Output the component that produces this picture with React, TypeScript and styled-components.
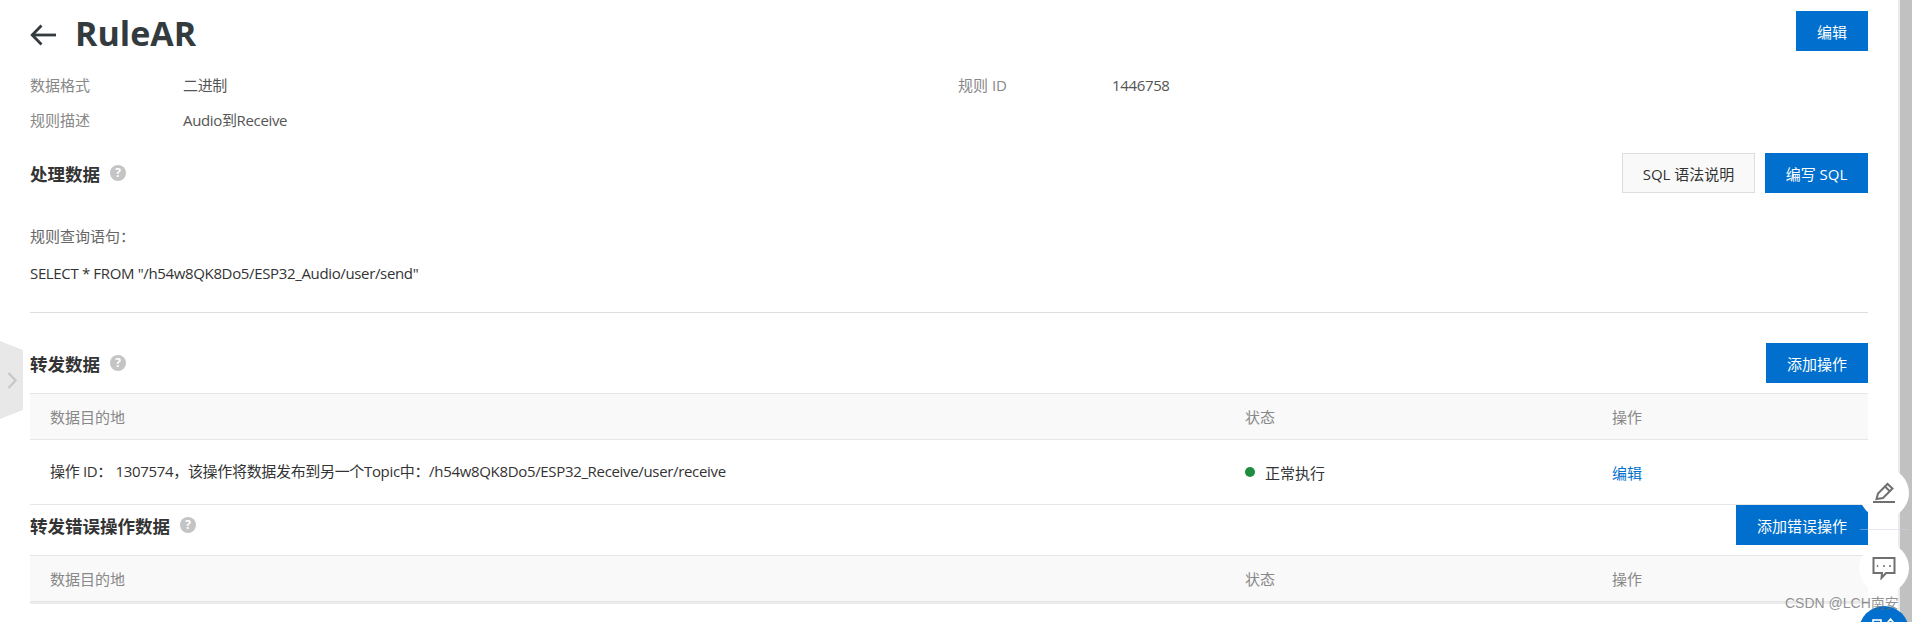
import styled, { createGlobalStyle } from 'styled-components';

const GlobalStyle = createGlobalStyle`
  html, body {
    margin: 0;
    padding: 0;
    background: #fff;
    overflow: hidden;
  }
  body {
    font-family: 'Open Sans', 'Noto Sans CJK SC', sans-serif;
    font-size: 15px;
    color: #333;
  }
`;

const columns = ['数据目的地', '状态', '操作'];

function HelpMark() {
  return <Help>?</Help>;
}

function TableHead() {
  return (
    <HeadRow>
      {columns.map((name) => (
        <span key={name}>{name}</span>
      ))}
    </HeadRow>
  );
}

export default function App() {
  return (
    <Page>
      <GlobalStyle />
      <Main>
        <Header>
          <TitleGroup>
            <svg width="26" height="22" viewBox="0 0 26 22" fill="none" stroke="#333b3f" strokeWidth="2.8">
              <path d="M26 11H3" />
              <path d="M11.5 1.5 2.2 11l9.3 9.5" />
            </svg>
            <Title>RuleAR</Title>
          </TitleGroup>
          <Button $primary $width={72}>编辑</Button>
        </Header>

        <Meta>
          <Label>数据格式</Label>
          <Value>二进制</Value>
          <Label>规则 ID</Label>
          <Value>1446758</Value>
          <Label>规则描述</Label>
          <Value>Audio到Receive</Value>
        </Meta>

        <SectionBar $top={16}>
          <Heading>
            处理数据
            <HelpMark />
          </Heading>
          <Actions>
            <Button $width={133}>SQL 语法说明</Button>
            <Button $primary $width={103}>编写 SQL</Button>
          </Actions>
        </SectionBar>

        <Query>
          <QueryLabel>规则查询语句：</QueryLabel>
          <QueryText>SELECT * FROM "/h54w8QK8Do5/ESP32_Audio/user/send"</QueryText>
        </Query>

        <SectionBar $top={30}>
          <Heading>
            转发数据
            <HelpMark />
          </Heading>
          <Button $primary $width={102}>添加操作</Button>
        </SectionBar>

        <Table $top={10}>
          <TableHead />
          <BodyRow>
            <RuleText>操作 ID： 1307574，该操作将数据发布到另一个Topic中：/h54w8QK8Do5/ESP32_Receive/user/receive</RuleText>
            <Status>
              <Dot />
              正常执行
            </Status>
            <EditLink>编辑</EditLink>
          </BodyRow>
        </Table>

        <SectionBar $top={0}>
          <Heading>
            转发错误操作数据
            <HelpMark />
          </Heading>
          <Button $primary $width={132}>添加错误操作</Button>
        </SectionBar>

        <Table $top={10} $closed>
          <TableHead />
        </Table>
      </Main>

      <ScrollTrack>
        <ScrollThumb />
      </ScrollTrack>

      <SideTab>
        <svg width="10" height="17" viewBox="0 0 10 17" fill="none" stroke="#c8c8c8" strokeWidth="2.4">
          <path d="M1.5 1 8.5 8.5l-7 7.5" />
        </svg>
      </SideTab>

      <FloatStack>
        <RoundButton>
          <svg width="24" height="24" viewBox="0 0 24 24" fill="none" stroke="#707070" strokeWidth="2">
            <path d="M4.5 18 6 12.5 15.5 3l5 4.5-9.5 9.5z" />
            <path d="M13 5.5 18 10.5" />
            <path d="M1 21h22" />
          </svg>
        </RoundButton>
        <RoundButton>
          <svg width="24" height="24" viewBox="0 0 24 24" fill="#707070" stroke="#707070" strokeWidth="2">
            <path d="M1.5 2h21v15h-8.5l-4.5 5 .5-5H1.5z" fill="none" />
            <circle cx="5.5" cy="10" r=".6" strokeWidth="1" />
            <circle cx="12" cy="10" r=".6" strokeWidth="1" />
            <circle cx="18" cy="10" r=".6" strokeWidth="1" />
          </svg>
        </RoundButton>
        <RoundButton $primary>
          <svg width="24" height="24" viewBox="0 0 24 24" fill="none" stroke="#fff" strokeWidth="1.6">
            <rect x="1" y="2" width="8" height="16" />
            <path d="M1 7h8M14 6.5 18.5 1l4.5 5.5" />
          </svg>
        </RoundButton>
      </FloatStack>

      <FaintLine />
      <Watermark>CSDN @LCH南安</Watermark>
    </Page>
  );
}

const Page = styled.div`
  position: relative;
  display: flex;
  width: 1912px;
  height: 622px;
  overflow: hidden;
`;

const Main = styled.main`
  flex: 1;
  min-width: 0;
  padding: 11px 30px 0;
`;

const Header = styled.header`
  display: flex;
  justify-content: space-between;
  align-items: center;
  height: 40px;
`;

const TitleGroup = styled.div`
  display: flex;
  align-items: center;
  gap: 21px;
  padding-top: 4px;
  svg {
    margin-top: 3px;
  }
`;

const Title = styled.h1`
  margin: 0;
  margin-left: -2px;
  font-size: 34px;
  line-height: 40px;
  font-weight: 700;
  color: #333b3f;
`;

const Meta = styled.div`
  display: grid;
  grid-template-columns: 153px 775px 154px 1fr;
  grid-auto-rows: 35px;
  align-items: center;
  margin-top: 16px;
`;

const Label = styled.span`
  color: #888;
`;

const Value = styled.span`
  color: #555;
  letter-spacing: -0.35px;
`;

const SectionBar = styled.div<{ $top: number }>`
  display: flex;
  justify-content: space-between;
  align-items: center;
  height: 40px;
  margin-top: ${(p) => p.$top}px;
`;

const Heading = styled.h2`
  display: flex;
  align-items: center;
  gap: 10px;
  margin: 0;
  font-size: 17.5px;
  font-weight: 700;
  color: #333;
`;

const Help = styled.span`
  display: inline-flex;
  justify-content: center;
  align-items: center;
  width: 16px;
  height: 16px;
  border-radius: 50%;
  background: #c4c4c4;
  color: #fff;
  font-size: 12px;
  font-weight: 700;
  line-height: 1;
`;

const Actions = styled.div`
  display: flex;
  gap: 10px;
`;

const Button = styled.button<{ $primary?: boolean; $width: number }>`
  box-sizing: border-box;
  width: ${(p) => p.$width}px;
  height: 40px;
  padding: 0;
  border: 1px solid ${(p) => (p.$primary ? '#006fcd' : '#ddd')};
  background: ${(p) => (p.$primary ? '#006fcd' : '#f9f9f9')};
  color: ${(p) => (p.$primary ? '#fff' : '#333')};
  font-family: inherit;
  font-size: 15px;
`;

const Query = styled.section`
  padding-top: 25px;
  height: 94px;
  border-bottom: 1px solid #ddd;
`;

const QueryLabel = styled.div`
  line-height: 37px;
  color: #666;
`;

const QueryText = styled.div`
  line-height: 37px;
  color: #333;
  letter-spacing: -0.35px;
`;

const Table = styled.section<{ $top: number; $closed?: boolean }>`
  margin-top: ${(p) => p.$top}px;
  border-bottom: ${(p) => (p.$closed ? '2px solid #ececec' : 'none')};
`;

const HeadRow = styled.div`
  box-sizing: border-box;
  display: grid;
  grid-template-columns: 1195px 367px 1fr;
  align-items: center;
  height: 47px;
  padding-left: 20px;
  background: #f9f9f9;
  border-top: 1px solid #e6e6e6;
  border-bottom: 1px solid #e6e6e6;
  color: #888;
`;

const BodyRow = styled.div`
  box-sizing: border-box;
  display: grid;
  grid-template-columns: 1195px 367px 1fr;
  align-items: center;
  height: 65px;
  padding-left: 20px;
  border-bottom: 1px solid #e6e6e6;
  color: #333;
`;

const RuleText = styled.span`
  padding-bottom: 4px;
  letter-spacing: -0.33px;
`;

const Status = styled.span`
  display: flex;
  align-items: center;
  gap: 10px;
`;

const Dot = styled.i`
  width: 10px;
  height: 10px;
  border-radius: 50%;
  background: #1e8e3e;
`;

const EditLink = styled.a`
  color: #0070cc;
`;

const ScrollTrack = styled.div`
  width: 12px;
  border-left: 2px solid #ececec;
  flex-shrink: 0;
`;

const ScrollThumb = styled.div`
  height: 100%;
  background: #c1c1c1;
`;

const SideTab = styled.div`
  position: absolute;
  left: 0;
  top: 341px;
  display: flex;
  align-items: center;
  justify-content: center;
  width: 23px;
  height: 78px;
  background: #e8e8e8;
  clip-path: polygon(0 0, 100% 9px, 100% 69px, 0 100%);
`;

const FloatStack = styled.div`
  position: absolute;
  left: 1859px;
  top: 468px;
  display: flex;
  flex-direction: column;
  gap: 25px;
`;

const RoundButton = styled.div<{ $primary?: boolean }>`
  display: flex;
  align-items: ${(p) => (p.$primary ? 'flex-start' : 'center')};
  justify-content: center;
  flex-shrink: 0;
  box-sizing: border-box;
  width: 50px;
  height: 50px;
  margin-top: ${(p) => (p.$primary ? '-12px' : '0')};
  padding-top: ${(p) => (p.$primary ? '12px' : '0')};
  border-radius: 50%;
  background: ${(p) => (p.$primary ? '#006fcd' : '#fff')};
`;

const FaintLine = styled.div`
  position: absolute;
  left: 1860px;
  top: 529px;
  width: 49px;
  height: 1px;
  background: rgba(200, 210, 225, 0.45);
`;

const Watermark = styled.div`
  position: absolute;
  left: 1785px;
  top: 594px;
  font-family: 'Liberation Sans', 'Noto Sans CJK SC', sans-serif;
  font-size: 14px;
  line-height: 18px;
  color: rgba(110, 110, 110, 0.75);
`;
